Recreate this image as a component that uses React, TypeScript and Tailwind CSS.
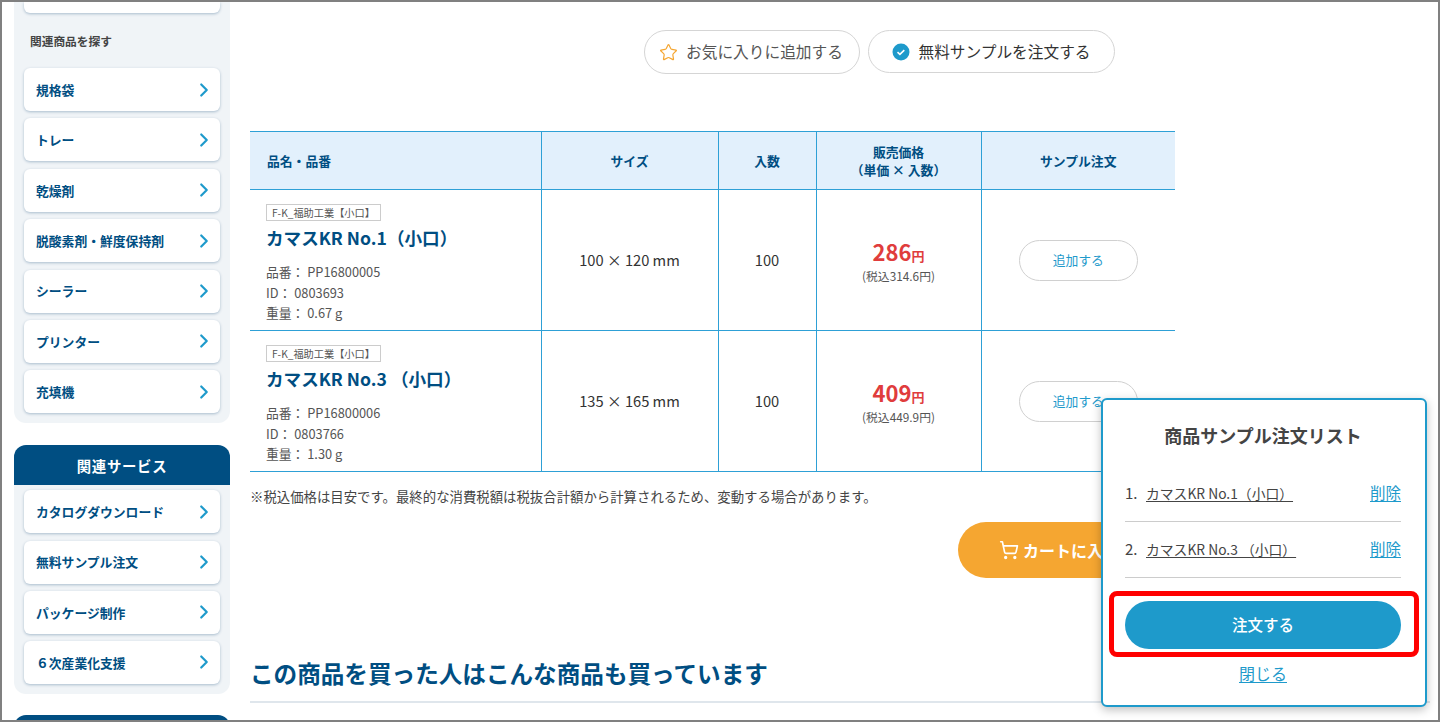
import { ChevronRight, ShoppingCart, Star } from "lucide-react";

const font = { fontFamily: '"Noto Sans CJK JP", "Noto Sans", sans-serif' };

const related = ["規格袋", "トレー", "乾燥剤", "脱酸素剤・鮮度保持剤", "シーラー", "プリンター", "充填機"];
const services = ["カタログダウンロード", "無料サンプル注文", "パッケージ制作", "６次産業化支援"];

const products = [
  { name: "カマスKR No.1（小口）", size: "100 × 120 mm", code: "PP16800005", id: "0803693", weight: "0.67 g", price: "286", tax: "(税込314.6円)" },
  { name: "カマスKR No.3 （小口）", size: "135 × 165 mm", code: "PP16800006", id: "0803766", weight: "1.30 g", price: "409", tax: "(税込449.9円)" }
];

function SideLink({ label }: { label: string }) {
  return (
    <a className="flex h-[43px] items-center justify-between rounded-md bg-white pl-3 pr-[5px] text-[12.8px] font-bold text-[#004e82] shadow-[0_1px_3px_rgba(0,60,110,0.3)]">
      <span>{label}</span>
      <ChevronRight size={22} strokeWidth={2.4} className="text-[#1e9acb]" />
    </a>
  );
}

function Sidebar() {
  return (
    <aside className="ml-3 w-[216px] shrink-0">
      <div className="rounded-b-xl bg-[#f0f4f7] px-[10px] pb-[10px]">
        <div className="h-[11px] rounded-b-md bg-white shadow-[0_1px_3px_rgba(0,60,110,0.3)]" />
        <p className="mb-[19px] mt-[20px] pl-[6px] text-[11.7px] font-bold leading-[16px] text-[#444]">関連商品を探す</p>
        <div className="flex flex-col gap-[7.4px]">
          {related.map((label) => (
            <SideLink key={label} label={label} />
          ))}
        </div>
      </div>
      <div className="mt-[22px] flex h-10 items-center justify-center rounded-t-xl bg-[#004e82] text-[14.4px] font-bold tracking-wider text-white">
        関連サービス
      </div>
      <div className="rounded-b-xl bg-[#f0f4f7] px-[10px] pb-[10px] pt-[5px]">
        <div className="flex flex-col gap-[7.2px]">
          {services.map((label) => (
            <SideLink key={label} label={label} />
          ))}
        </div>
      </div>
      <div className="mt-[21px] h-10 rounded-t-xl bg-[#004e82]" />
    </aside>
  );
}

function ProductTable() {
  return (
    <table className="w-[925px] table-fixed border-collapse">
      <thead>
        <tr className="h-[58px] bg-[#e2f0fc] text-[12.8px] font-bold leading-[18px] text-[#004e82]">
          <th className="w-[291px] border border-l-0 border-[#2ea0d6] pl-[17px] text-left">品名・品番</th>
          <th className="w-[177px] border border-[#2ea0d6]">サイズ</th>
          <th className="w-[98px] border border-[#2ea0d6]">入数</th>
          <th className="w-[165px] border border-[#2ea0d6]">
            販売価格
            <br />
            （単価 × 入数）
          </th>
          <th className="border border-r-0 border-[#2ea0d6]">サンプル注文</th>
        </tr>
      </thead>
      <tbody>
        {products.map((p) => (
          <tr key={p.code} className="h-[141px] text-center text-[14.7px] text-[#333]">
            <td className="border border-l-0 border-[#2ea0d6] pl-4 pt-[14px] text-left align-top">
              <span className="block w-fit border border-[#ccc] px-[5px] text-[10.2px] leading-[15px] text-[#555]">F-K_福助工業【小口】</span>
              <p className="mt-[3px] text-[17.6px] font-bold leading-[27px] text-[#004e82]">{p.name}</p>
              <div className="mt-[11px] text-[12.8px] leading-[20.5px] text-[#555]">
                <p>品番： {p.code}</p>
                <p>ID： {p.id}</p>
                <p>重量： {p.weight}</p>
              </div>
            </td>
            <td className="border border-[#2ea0d6]">{p.size}</td>
            <td className="border border-[#2ea0d6]">100</td>
            <td className="border border-[#2ea0d6]">
              <p className="text-[22px] font-bold leading-[26px] text-[#e03c3c]">
                {p.price}
                <span className="text-[13px]">円</span>
              </p>
              <p className="text-[11.8px] leading-[14px] text-[#555]">{p.tax}</p>
            </td>
            <td className="border border-r-0 border-[#2ea0d6]">
              <button className="h-[41px] w-[119px] rounded-full border border-[#d0d0d0] text-[12.8px] text-[#1e9acb]">追加する</button>
            </td>
          </tr>
        ))}
      </tbody>
    </table>
  );
}

function SampleList() {
  return (
    <div className="absolute left-[1099px] top-[396px] flex h-[309px] w-[326px] flex-col rounded-md border-2 border-[#1e9acb] bg-white pl-[22px] pr-[24px] shadow-[0_3px_10px_rgba(0,0,0,0.25)]">
      <h3 className="mt-[22px] text-center text-[18px] font-bold leading-[27px] text-[#444]">商品サンプル注文リスト</h3>
      <ul className="mt-[17px] text-[#444]">
        {products.map((p, i) => (
          <li key={p.code} className="flex h-[56px] items-center justify-between border-b border-[#ccc] pb-[1px]">
            <span className="flex items-center">
              <span className="w-[21px] text-[15px]">{i + 1}.</span>
              <a className="text-[13.8px] underline underline-offset-2">{p.name}</a>
            </span>
            <a className="text-[15.5px] text-[#1e9acb] underline underline-offset-2">削除</a>
          </li>
        ))}
      </ul>
      <button className="mt-[23px] h-12 shrink-0 rounded-full bg-[#1e9acb] text-[15.5px] font-medium text-white">注文する</button>
      <a className="mt-[12px] text-center text-[16px] text-[#1e9acb] underline underline-offset-2">閉じる</a>
      <div className="absolute left-[6px] top-[191px] h-[66px] w-[310px] rounded-lg border-[5px] border-[#ff0000]" />
    </div>
  );
}

export default function App() {
  return (
    <div style={font} className="relative h-[722px] overflow-hidden border-2 border-[#808080] bg-white">
      <div className="flex h-full">
        <Sidebar />
        <main className="ml-5 w-[925px] shrink-0">
          <div className="mt-[28px] flex justify-end gap-2 pr-[60px]">
            <button className="flex h-[44px] w-[216px] items-center justify-center gap-[8px] rounded-full border border-[#d5d5d5] text-[15.7px] text-[#555]">
              <Star size={19} strokeWidth={1.5} className="-ml-[2px] text-[#f5a631]" />
              お気に入りに追加する
            </button>
            <button className="flex h-[43px] w-[247px] items-center justify-center gap-[8px] rounded-full border border-[#d5d5d5] text-[15.7px] text-[#333]">
              <svg width="18" height="18" viewBox="0 0 18 18">
                <circle cx="9" cy="9" r="8.5" fill="#1e9acb" />
                <path d="M5.5 9.2l2.4 2.2 4.4-4.2" fill="none" stroke="#fff" strokeWidth="1.6" />
              </svg>
              無料サンプルを注文する
            </button>
          </div>
          <div className="mt-[57px]">
            <ProductTable />
          </div>
          <p className="mt-[15px] text-[13.4px] leading-[18px] text-[#444]">※税込価格は目安です。最終的な消費税額は税抜合計額から計算されるため、変動する場合があります。</p>
          <div className="mt-[17px] flex justify-end">
            <button className="-mr-[45px] flex h-[56px] w-[262px] items-center gap-[4px] rounded-full bg-[#f5a631] pl-[41px] text-[16px] font-bold text-white">
              <ShoppingCart size={20} strokeWidth={2} />
              カートに入れる
            </button>
          </div>
          <h2 className="mt-[77px] text-[23.6px] font-bold leading-[36px] text-[#004e82]">この商品を買った人はこんな商品も買っています</h2>
          <div className="mt-[10px] h-[2px] w-[1180px] bg-[#dfe6ec]" />
        </main>
      </div>
      <SampleList />
    </div>
  );
}
